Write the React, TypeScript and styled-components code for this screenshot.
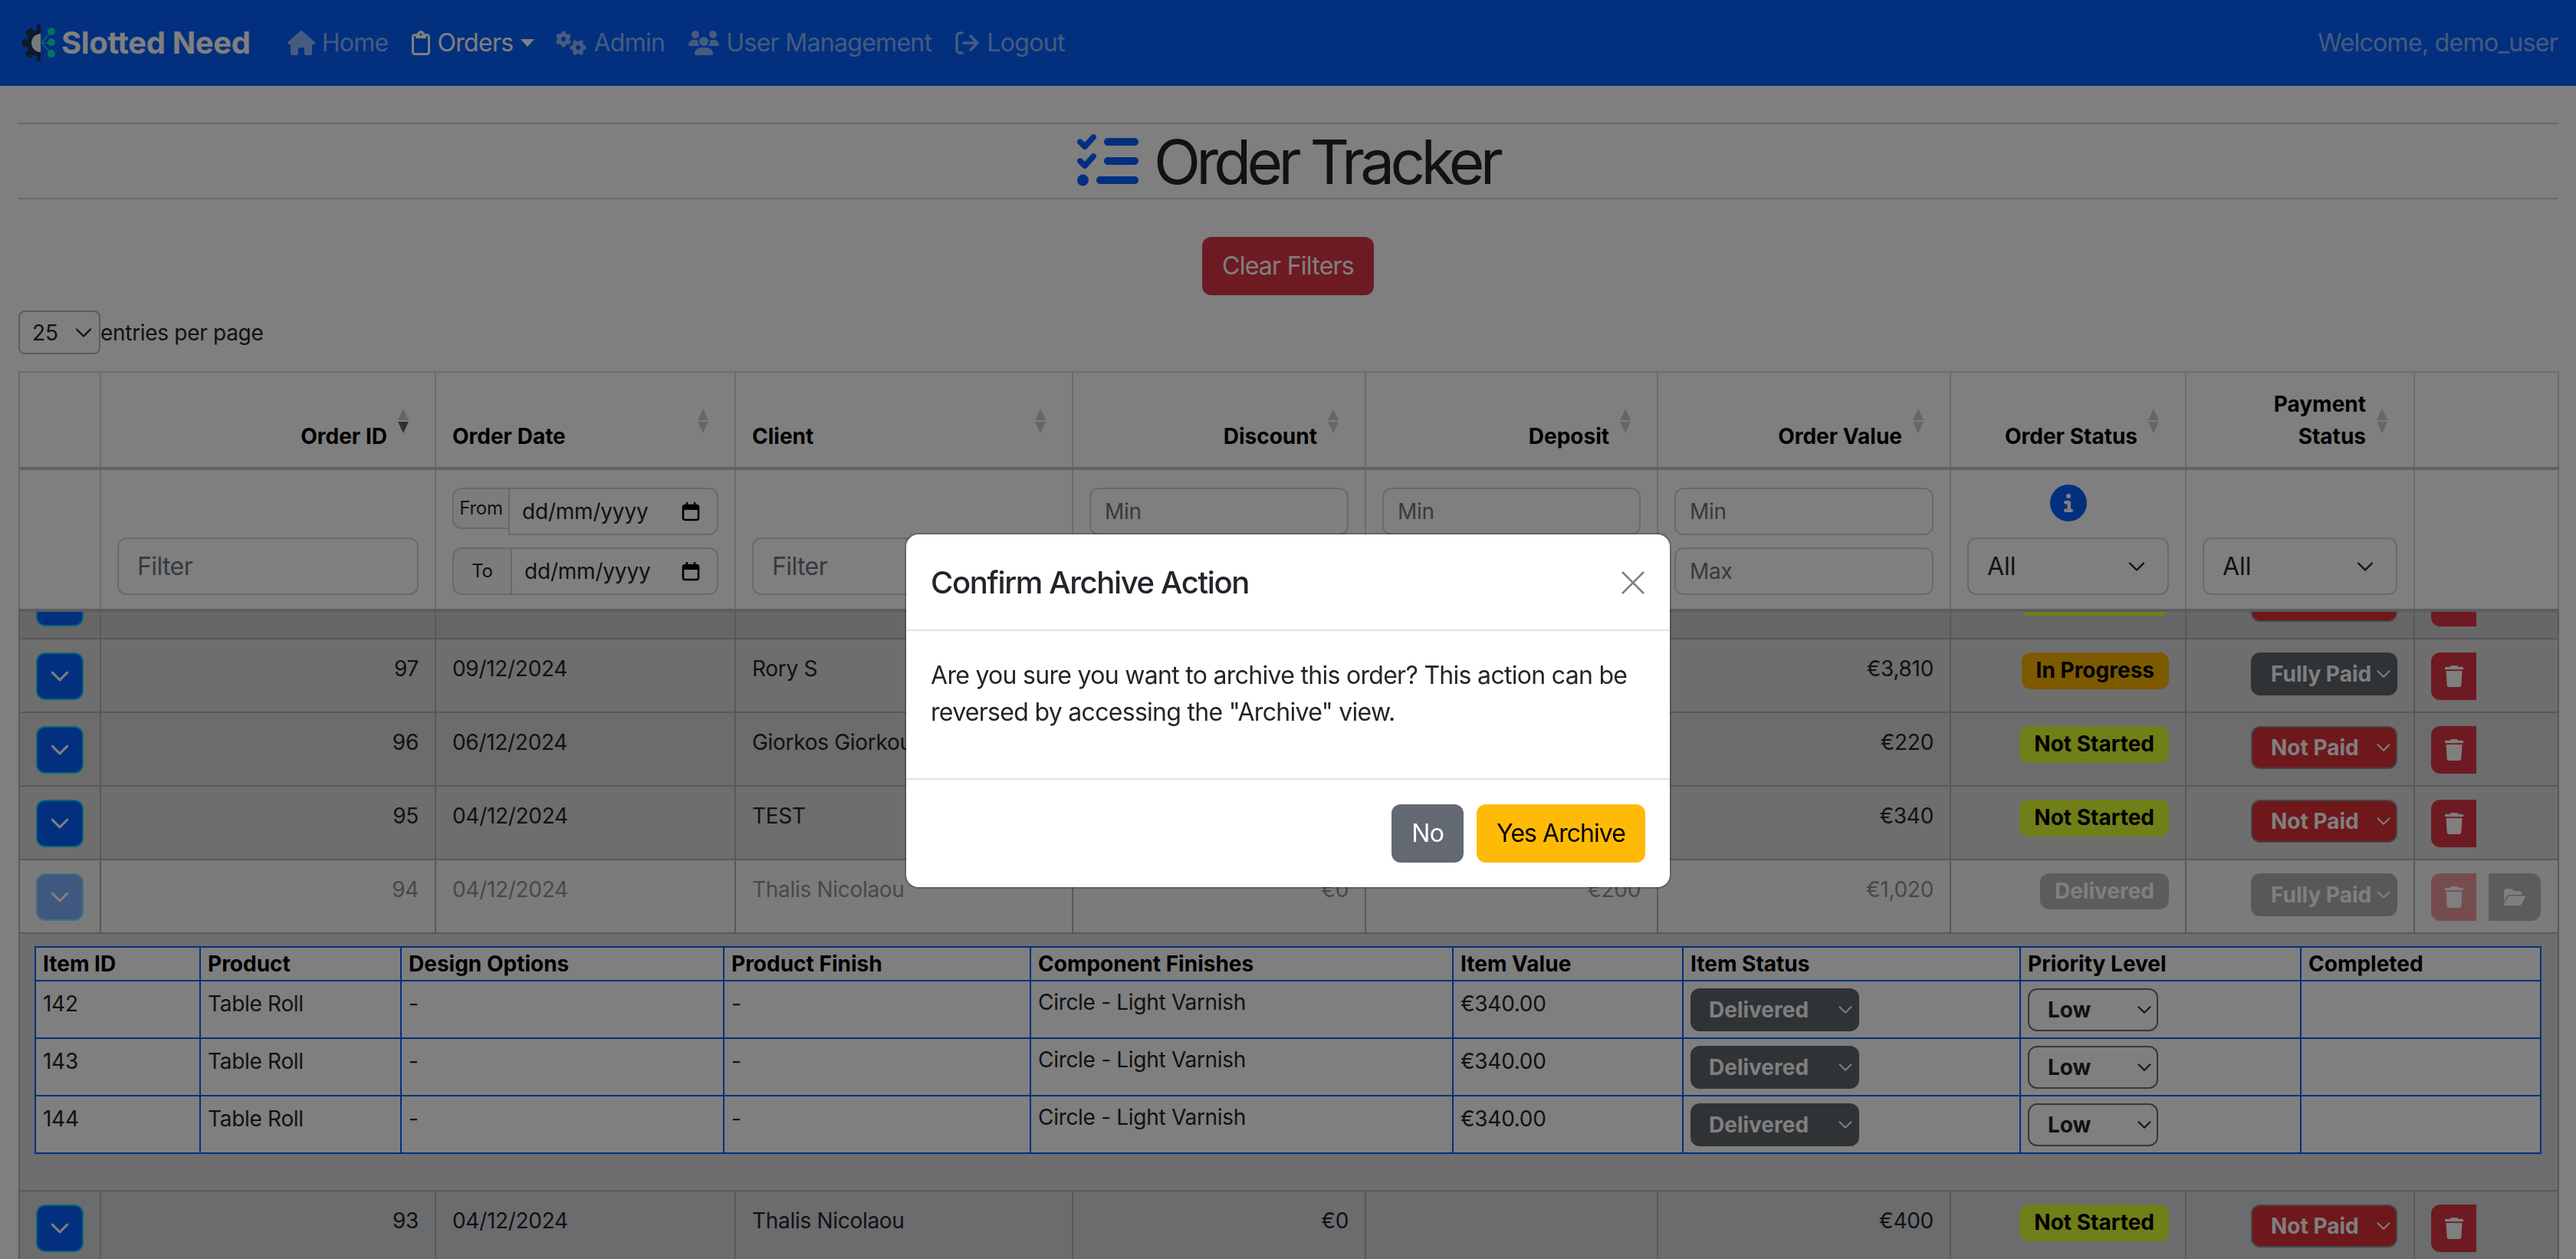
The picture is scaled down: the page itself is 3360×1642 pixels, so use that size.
import React from 'react';

import { createGlobalStyle, styled } from 'styled-components';
import {
  FaCircleInfo,
  FaFolderOpen,
  FaGears,
  FaHouse,
  FaListCheck,
  FaRegClipboard,
  FaTrash,
  FaUsers,
} from 'react-icons/fa6';

const BLUE = '#0560fe';

const chevron = (color: string) =>
  `url("data:image/svg+xml,%3csvg xmlns='http://www.w3.org/2000/svg' viewBox='0 0 16 16'%3e%3cpath fill='none' stroke='${color}' stroke-linecap='round' stroke-linejoin='round' stroke-width='1.6' d='m2 5 6 6 6-6'/%3e%3c/svg%3e")`;

const GlobalStyle = createGlobalStyle`
  html, body {
    margin: 0;
    height: 1642px;
    overflow: hidden;
    background: #fff;
  }
  body {
    font-family: Inter, "Liberation Sans", sans-serif;
    font-size: 32px;
    line-height: 1.5;
    letter-spacing: -0.7px;
    color: #212529;
  }
  * {
    box-sizing: border-box;
  }
`;

const Navbar = styled.nav`
  display: flex;
  align-items: center;
  height: 112px;
  padding: 0 24px;
  background: ${BLUE};
`;

const Brand = styled.a`
  display: flex;
  align-items: center;
  gap: 8px;
  margin-right: 48px;
  font-size: 40px;
  font-weight: 700;
  letter-spacing: -0.36px;
  color: #fff;
`;

const NavList = styled.div`
  display: flex;
  align-items: center;
  gap: 31px;
  flex: 1;
`;

const NavLink = styled.a<{ $active?: boolean }>`
  display: flex;
  align-items: center;
  gap: 9px;
  color: ${(p) => (p.$active ? '#fff' : 'rgba(255, 255, 255, 0.55)')};
`;

const NavIcon = styled.span<{ $width: number }>`
  display: flex;
  flex: none;
  width: ${(p) => p.$width}px;
  height: 32px;

  svg {
    width: 100%;
    height: 100%;
  }
`;

const Caret = styled.span`
  width: 0;
  height: 0;
  margin: 0 -3px 0 1px;
  border-top: 10px solid #fff;
  border-left: 9px solid transparent;
  border-right: 9px solid transparent;
`;

const Welcome = styled.span`
  color: rgba(255, 255, 255, 0.55);
`;

const Main = styled.main`
  padding: 48px 24px 0;
`;

const TitleBand = styled.div`
  display: flex;
  align-items: center;
  justify-content: center;
  gap: 20px;
  height: 100px;
  border-top: 2px solid #cfd4da;
  border-bottom: 2px solid #cfd4da;
`;

const Title = styled.h1`
  margin: 2px 0 0;
  font-size: 80px;
  font-weight: 400;
  line-height: 1.2;
  letter-spacing: -5.75px;
`;

const TitleIcon = styled.span`
  display: flex;
  color: ${BLUE};
  font-size: 80px;
`;

const ClearRow = styled.div`
  display: flex;
  justify-content: center;
  margin-top: 49px;
`;

const Button = styled.button<{ $tone: 'danger' | 'secondary' | 'warning' }>`
  height: 76px;
  padding: 0 26px;
  border: 0;
  border-radius: 12px;
  font: inherit;
  letter-spacing: ${(p) => (p.$tone === 'warning' ? '-0.95px' : '-0.75px')};
  color: ${(p) => (p.$tone === 'warning' ? '#000' : '#fff')};
  background: ${(p) => (p.$tone === 'danger' ? '#dc3545' : p.$tone === 'warning' ? '#ffba08' : '#626973')};
`;

const EntriesRow = styled.div`
  display: flex;
  align-items: center;
  margin: 20px 0 22px;
  font-size: 28px;
  letter-spacing: -0.3px;
`;

const EntriesSelect = styled.select`
  width: 107px;
  height: 57px;
  padding: 0 0 0 16px;
  appearance: none;
  border: 2px solid #b4b8bd;
  border-radius: 8px;
  font: inherit;
  color: #212529;
  background: #fff ${chevron('%23212529')} no-repeat right 8px center / 24px;
`;

const OrdersTable = styled.table`
  width: 3312px;
  table-layout: fixed;
  border-collapse: collapse;
  font-size: 28px;
  letter-spacing: -0.3px;
  border: 2px solid #d4d8dc;
`;

const HeadCell = styled.th<{ $align?: 'left' | 'right' | 'center' }>`
  position: relative;
  height: 126px;
  padding: 0 62px 19px ${(p) => (p.$align === 'center' ? '70px' : '21px')};
  vertical-align: bottom;
  font-weight: 700;
  line-height: 42px;
  letter-spacing: 0;
  color: #000;
  text-align: ${(p) => p.$align ?? 'left'};
  border-left: 2px solid #d4d8dc;
  border-right: 2px solid #d4d8dc;
  border-bottom: 4px solid #bfc3c7;
`;

const SortIcon = styled.svg`
  position: absolute;
  top: 47px;
  right: 34px;
  width: 14px;
  height: 32px;
`;

const FilterCell = styled.td`
  height: 185px;
  padding: 0 21px 18px;
  vertical-align: bottom;
  border-left: 2px solid #d4d8dc;
  border-right: 2px solid #d4d8dc;
  border-bottom: 4px solid #b4b8bc;
  background: #fff;
`;

const FilterStack = styled.div<{ $center?: boolean }>`
  display: flex;
  flex-direction: column;
  gap: 16px;
  align-items: ${(p) => (p.$center ? 'center' : 'stretch')};
`;

const TextFilter = styled.input<{ $small?: boolean }>`
  display: block;
  width: 100%;
  height: ${(p) => (p.$small ? '62px' : '75px')};
  padding: 0 ${(p) => (p.$small ? '18px' : '24px')};
  border: 2px solid #ced4da;
  border-radius: 12px;
  font-family: inherit;
  font-size: ${(p) => (p.$small ? '28px' : '32px')};
  letter-spacing: ${(p) => (p.$small ? '-0.3px' : '-0.6px')};
  background: #fff;

  &::placeholder {
    color: #6c757d;
    opacity: 1;
  }
`;

const DateGroup = styled.div`
  display: flex;
  align-items: flex-start;
`;

const DateLabel = styled.span<{ $full?: boolean }>`
  display: flex;
  align-items: center;
  justify-content: center;
  flex: none;
  width: ${(p) => (p.$full ? '76px' : '73px')};
  height: ${(p) => (p.$full ? '62px' : '54px')};
  border: 2px solid #ced4da;
  border-right: 0;
  border-radius: 12px 0 0 12px;
  font-size: 24px;
  background: #f8f9fa;
`;

const DateInput = styled.input`
  flex: 1;
  min-width: 0;
  height: 62px;
  padding: 0 16px;
  border: 2px solid #ced4da;
  border-radius: 0 12px 12px 0;
  font-family: inherit;
  font-size: 28px;
  letter-spacing: -0.2px;
  color: #212529;
  background: #fff;
`;

const DateBox = styled.span`
  position: relative;
  display: flex;
  flex: 1;
  min-width: 0;
`;

const CalendarIcon = styled.svg`
  position: absolute;
  top: 18px;
  right: 24px;
  width: 24px;
  height: 26px;
`;

const InfoIcon = styled.span`
  display: flex;
  margin-bottom: 5px;
  font-size: 48px;
  color: ${BLUE};
`;

const FilterSelect = styled.select`
  display: block;
  width: 100%;
  height: 75px;
  padding: 0 0 0 24px;
  appearance: none;
  border: 2px solid #ced4da;
  border-radius: 12px;
  font-family: inherit;
  font-size: 32px;
  color: #212529;
  background: #fff ${chevron('%23212529')} no-repeat right 24px center / 32px 24px;
`;

const BodyRow = styled.tr<{ $bg: string; $dim?: boolean }>`
  background: ${(p) => p.$bg};
  opacity: ${(p) => (p.$dim ? 0.5 : 1)};
`;

const Cell = styled.td<{ $align?: 'left' | 'right' }>`
  height: 96px;
  padding: 17px 21px 0;
  vertical-align: top;
  line-height: 42px;
  text-align: ${(p) => p.$align ?? 'left'};
  border: 2px solid #b2b2b2;
`;

const ClippedCell = styled.td`
  height: 36px;
  padding: 0 21px;
  vertical-align: top;
  text-align: right;
  border: 2px solid #b2b2b2;
`;

const ClipBox = styled.div`
  height: 34px;
  overflow: hidden;
`;

const ClipInner = styled.div`
  margin-top: -43px;
`;

const ExpandButton = styled.button`
  display: flex;
  align-items: center;
  justify-content: center;
  width: 62px;
  height: 62px;
  padding: 0;
  border: 2px solid #0dcaf0;
  border-radius: 12px;
  background: ${BLUE};
  color: #fff;

  svg {
    width: 26px;
    height: 26px;
  }
`;

const badgeColors = {
  progress: '#fab400',
  notStarted: '#e2fe30',
  delivered: '#6c757d',
};

const Badge = styled.span<{ $tone: keyof typeof badgeColors }>`
  display: inline-block;
  height: ${(p) => (p.$tone === 'delivered' ? '47px' : '48px')};
  padding: 0 19px;
  border-radius: 12px;
  font-weight: 700;
  line-height: 46px;
  letter-spacing: 0;
  vertical-align: top;
  color: ${(p) => (p.$tone === 'delivered' ? '#fff' : '#000')};
  background: ${(p) => badgeColors[p.$tone]};
`;

const ClippedBadge = styled(Badge)`
  width: 194px;
`;

const PaySelect = styled.select<{ $tone: 'danger' | 'dark' }>`
  display: block;
  height: 56px;
  width: 191px;
  margin-left: auto;
  padding: 0 0 0 24px;
  appearance: none;
  border: 2px solid ${(p) => (p.$tone === 'danger' ? '#8a8a8a' : '#5c636a')};
  border-radius: 12px;
  font-family: inherit;
  font-size: 28px;
  font-weight: 700;
  color: #fff;
  background: ${(p) => (p.$tone === 'danger' ? '#dc3038' : '#5f666c')} ${chevron('%23fff')} no-repeat right 6px center / 20px;
`;

const ActionRow = styled.div`
  display: flex;
  gap: 16px;
`;

const IconButton = styled.button<{ $tone: 'danger' | 'secondary' }>`
  display: flex;
  align-items: center;
  justify-content: center;
  width: ${(p) => (p.$tone === 'danger' ? '59px' : '68px')};
  height: 62px;
  padding: 0;
  border: 0;
  border-radius: ${(p) => (p.$tone === 'danger' ? '12px 0 0 12px' : '0 12px 12px 0')};
  font-size: 28px;
  color: #fff;
  background: ${(p) => (p.$tone === 'danger' ? '#dc3545' : '#6c757d')};
`;

const DetailCell = styled.td`
  padding: 16px 19px 47px;
  background: #dcdcdc;
  border: 2px solid #b2b2b2;
`;

const ItemsTable = styled.table`
  width: 3268px;
  table-layout: fixed;
  border-collapse: collapse;
  font-size: 28px;
  line-height: 42px;
  background: #fff;
`;

const ItemHead = styled.th`
  height: 44px;
  padding: 0 9px;
  text-align: left;
  font-weight: 700;
  letter-spacing: 0;
  color: #000;
  border: 2px solid ${BLUE};
`;

const ItemCell = styled.td<{ $raised?: boolean }>`
  height: 75px;
  padding: ${(p) => (p.$raised ? '6px' : '8px')} 9px 0;
  vertical-align: top;
  border: 2px solid ${BLUE};
`;

const ItemSelectCell = styled.td`
  height: 75px;
  padding: 0 9px;
  vertical-align: middle;
  border: 2px solid ${BLUE};
`;

const ItemStatusSelect = styled.select`
  display: block;
  width: 220px;
  height: 56px;
  padding: 0 0 0 24px;
  appearance: none;
  border: 0;
  border-radius: 12px;
  font-family: inherit;
  font-size: 28px;
  font-weight: 700;
  color: #fff;
  background: #5f666c ${chevron('%23fff')} no-repeat right 8px center / 20px;
`;

const PrioritySelect = styled.select`
  display: block;
  width: 170px;
  height: 56px;
  padding: 0 0 0 24px;
  appearance: none;
  border: 2px solid #6f6f6f;
  border-radius: 12px;
  font-family: inherit;
  font-size: 28px;
  font-weight: 700;
  color: #212529;
  background: #fff ${chevron('%23212529')} no-repeat right 6px center / 20px;
`;

const Backdrop = styled.div`
  position: fixed;
  inset: 0;
  background: rgba(0, 0, 0, 0.5);
`;

const DialogLayer = styled.div`
  position: fixed;
  inset: 0;
  display: flex;
  justify-content: center;
  align-items: flex-start;
  padding-top: 697px;
`;

const Dialog = styled.div`
  width: 996px;
  border-radius: 16px;
  background: #fff;
  box-shadow: 0 0 0 2px rgba(0, 0, 0, 0.2);
`;

const DialogHeader = styled.div`
  display: flex;
  align-items: center;
  justify-content: space-between;
  height: 126px;
  padding: 2px 32px 0 32px;
  border-bottom: 2px solid #dee2e6;
`;

const DialogTitle = styled.h5`
  margin: 0;
  font-size: 40px;
  font-weight: 500;
  line-height: 1.2;
  letter-spacing: -1.36px;
`;

const CloseIcon = styled.svg`
  width: 32px;
  height: 32px;
  color: #7f7f7f;
`;

const DialogBody = styled.div`
  padding: 34px 32px 32px;
`;

const DialogText = styled.p`
  margin: 0 0 30px;
`;

const DialogFooter = styled.div`
  display: flex;
  justify-content: flex-end;
  gap: 17px;
  padding: 32px;
  border-top: 2px solid #dee2e6;
`;

const Logo = () => (
  <svg width="48" height="48" viewBox="0 0 48 48" aria-hidden="true">
    <defs>
      <clipPath id="logo-left">
        <rect x="0" y="0" width="29" height="48" />
      </clipPath>
    </defs>
    <g clipPath="url(#logo-left)" fill="#1f3350">
      <circle cx="29" cy="24" r="18" />
      {[0, 45, 90, 135, 180, 225, 270, 315].map((a) => (
        <rect key={a} x="24" y="0" width="10" height="12" transform={`rotate(${a} 29 24)`} />
      ))}
      <circle cx="29" cy="24" r="12" fill="#f2f4f7" />
    </g>
    <g stroke="#10d8c0" strokeWidth="1.5" fill="none">
      <path d="M30 24 43 9M30 24h13M30 24l13 14" />
    </g>
    <g fill="#0ee0c4">
      <circle cx="43" cy="9" r="5" />
      <circle cx="43" cy="23" r="5" />
      <circle cx="43" cy="38" r="5" />
    </g>
  </svg>
);

const LogoutIcon = () => (
  <svg viewBox="0 0 32 32" fill="none" stroke="currentColor" strokeWidth="3.4" strokeLinecap="round" strokeLinejoin="round">
    <path d="M9 3H6a4 4 0 0 0-4 4v18a4 4 0 0 0 4 4h3" />
    <path d="M11 16h18M20 7l9 9-9 9" />
  </svg>
);

const Sort = ({ active }: { active?: boolean }) => (
  <SortIcon viewBox="0 0 14 32" aria-hidden="true">
    <path d="M7 0 14 15H0z" fill="#000" opacity="0.2" />
    <path d="M0 17h14L7 32z" fill="#000" opacity={active ? 0.62 : 0.2} />
  </SortIcon>
);

const Chevron = () => (
  <svg viewBox="0 0 16 16" fill="none" stroke="currentColor" strokeWidth="1.8" strokeLinecap="round" strokeLinejoin="round">
    <path d="m2 5 6 6 6-6" />
  </svg>
);

const DateFilter = ({ label, full }: { label: string; full?: boolean }) => (
  <DateGroup>
    <DateLabel $full={full}>{label}</DateLabel>
    <DateBox>
      <DateInput readOnly value="dd/mm/yyyy" />
      <CalendarIcon viewBox="0 0 24 26" fill="none" stroke="#000" strokeWidth="2.6" aria-hidden="true">
        <rect x="2" y="5" width="20" height="19" rx="2.5" />
        <path d="M2 8h20" strokeWidth="6" />
        <path d="M7 1v5M17 1v5" />
      </CalendarIcon>
    </DateBox>
  </DateGroup>
);

const columnWidths = [106, 437, 391, 440, 382, 381, 382, 307, 298, 188];

const itemColumnWidths = [215, 262, 421, 400, 551, 300, 440, 366, 313];

const itemHeads = [
  'Item ID',
  'Product',
  'Design Options',
  'Product Finish',
  'Component Finishes',
  'Item Value',
  'Item Status',
  'Priority Level',
  'Completed',
];

const orders = [
  { id: 97, date: '09/12/2024', client: 'Rory S', discount: '', deposit: '', value: '€3,810', status: 'progress', statusText: 'In Progress', pay: 'Fully Paid', bg: '#dcdcdc' },
  { id: 96, date: '06/12/2024', client: 'Giorkos Giorkou', discount: '', deposit: '', value: '€220', status: 'notStarted', statusText: 'Not Started', pay: 'Not Paid', bg: '#d8d8d8' },
  { id: 95, date: '04/12/2024', client: 'TEST', discount: '', deposit: '', value: '€340', status: 'notStarted', statusText: 'Not Started', pay: 'Not Paid', bg: '#dcdcdc' },
] as const;

type OrderRowProps = {
  id: number;
  date: string;
  client: string;
  discount: string;
  deposit: string;
  value: string;
  status: keyof typeof badgeColors;
  statusText: string;
  pay: string;
  bg: string;
  dim?: boolean;
  archive?: boolean;
};

const OrderRow = (o: OrderRowProps) => (
  <BodyRow $bg={o.bg} $dim={o.dim}>
    <Cell>
      <ExpandButton type="button">
        <Chevron />
      </ExpandButton>
    </Cell>
    <Cell $align="right">{o.id}</Cell>
    <Cell>{o.date}</Cell>
    <Cell>{o.client}</Cell>
    <Cell $align="right">{o.discount}</Cell>
    <Cell $align="right">{o.deposit}</Cell>
    <Cell $align="right">{o.value}</Cell>
    <Cell $align="right">
      <Badge $tone={o.status}>{o.statusText}</Badge>
    </Cell>
    <Cell>
      <PaySelect $tone={o.pay === 'Not Paid' ? 'danger' : 'dark'} defaultValue={o.pay}>
        <option>{o.pay}</option>
      </PaySelect>
    </Cell>
    <Cell>
      <ActionRow>
        <IconButton $tone="danger" type="button">
          <FaTrash />
        </IconButton>
        {o.archive && (
          <IconButton $tone="secondary" type="button">
            <FaFolderOpen />
          </IconButton>
        )}
      </ActionRow>
    </Cell>
  </BodyRow>
);

export default function App() {
  return (
    <>
      <GlobalStyle />
      <Navbar>
        <Brand>
          <Logo />
          Slotted Need
        </Brand>
        <NavList>
          <NavLink>
            <NavIcon $width={36}>
              <FaHouse />
            </NavIcon>
            Home
          </NavLink>
          <NavLink $active>
            <NavIcon $width={24}>
              <FaRegClipboard />
            </NavIcon>
            Orders
            <Caret />
          </NavLink>
          <NavLink>
            <NavIcon $width={40}>
              <FaGears />
            </NavIcon>
            Admin
          </NavLink>
          <NavLink>
            <NavIcon $width={40}>
              <FaUsers />
            </NavIcon>
            User Management
          </NavLink>
          <NavLink>
            <NavIcon $width={32}>
              <LogoutIcon />
            </NavIcon>
            Logout
          </NavLink>
        </NavList>
        <Welcome>Welcome, demo_user</Welcome>
      </Navbar>

      <Main>
        <TitleBand>
          <TitleIcon>
            <FaListCheck />
          </TitleIcon>
          <Title>Order Tracker</Title>
        </TitleBand>

        <ClearRow>
          <Button $tone="danger" type="button">
            Clear Filters
          </Button>
        </ClearRow>

        <EntriesRow>
          <EntriesSelect defaultValue="25">
            <option>25</option>
          </EntriesSelect>
          entries per page
        </EntriesRow>

        <OrdersTable>
          <colgroup>
            {columnWidths.map((w, i) => (
              <col key={i} width={w} />
            ))}
          </colgroup>
          <thead>
            <tr>
              <HeadCell />
              <HeadCell $align="right">
                Order ID
                <Sort active />
              </HeadCell>
              <HeadCell>
                Order Date
                <Sort />
              </HeadCell>
              <HeadCell>
                Client
                <Sort />
              </HeadCell>
              <HeadCell $align="right">
                Discount
                <Sort />
              </HeadCell>
              <HeadCell $align="right">
                Deposit
                <Sort />
              </HeadCell>
              <HeadCell $align="right">
                Order Value
                <Sort />
              </HeadCell>
              <HeadCell $align="center">
                Order Status
                <Sort />
              </HeadCell>
              <HeadCell $align="right">
                Payment
                <br />
                Status
                <Sort />
              </HeadCell>
              <HeadCell />
            </tr>
            <tr>
              <FilterCell />
              <FilterCell>
                <TextFilter placeholder="Filter" />
              </FilterCell>
              <FilterCell>
                <FilterStack>
                  <DateFilter label="From" />
                  <DateFilter label="To" full />
                </FilterStack>
              </FilterCell>
              <FilterCell>
                <TextFilter placeholder="Filter" />
              </FilterCell>
              {[0, 1, 2].map((i) => (
                <FilterCell key={i}>
                  <FilterStack>
                    <TextFilter $small placeholder="Min" />
                    <TextFilter $small placeholder="Max" />
                  </FilterStack>
                </FilterCell>
              ))}
              <FilterCell>
                <FilterStack $center>
                  <InfoIcon>
                    <FaCircleInfo />
                  </InfoIcon>
                  <FilterSelect defaultValue="All">
                    <option>All</option>
                  </FilterSelect>
                </FilterStack>
              </FilterCell>
              <FilterCell>
                <FilterSelect defaultValue="All">
                  <option>All</option>
                </FilterSelect>
              </FilterCell>
              <FilterCell />
            </tr>
          </thead>
          <tbody>
            <BodyRow $bg="#cfcfd1">
              <ClippedCell>
                <ClipBox>
                  <ClipInner>
                    <ExpandButton type="button" />
                  </ClipInner>
                </ClipBox>
              </ClippedCell>
              <ClippedCell />
              <ClippedCell />
              <ClippedCell />
              <ClippedCell />
              <ClippedCell />
              <ClippedCell />
              <ClippedCell>
                <ClipBox>
                  <ClipInner>
                    <ClippedBadge $tone="notStarted" />
                  </ClipInner>
                </ClipBox>
              </ClippedCell>
              <ClippedCell>
                <ClipBox>
                  <ClipInner>
                    <PaySelect $tone="danger" />
                  </ClipInner>
                </ClipBox>
              </ClippedCell>
              <ClippedCell>
                <ClipBox>
                  <ClipInner>
                    <IconButton $tone="danger" type="button" />
                  </ClipInner>
                </ClipBox>
              </ClippedCell>
            </BodyRow>

            {orders.map((o) => (
              <OrderRow key={o.id} {...o} />
            ))}

            <OrderRow
              id={94}
              date="04/12/2024"
              client="Thalis Nicolaou"
              discount="€0"
              deposit="€200"
              value="€1,020"
              status="delivered"
              statusText="Delivered"
              pay="Fully Paid"
              bg="#f0f0f0"
              dim
              archive
            />

            <tr>
              <DetailCell colSpan={10}>
                <ItemsTable>
                  <colgroup>
                    {itemColumnWidths.map((w, i) => (
                      <col key={i} width={w} />
                    ))}
                  </colgroup>
                  <thead>
                    <tr>
                      {itemHeads.map((h) => (
                        <ItemHead key={h}>{h}</ItemHead>
                      ))}
                    </tr>
                  </thead>
                  <tbody>
                    {[142, 143, 144].map((itemId) => (
                      <tr key={itemId}>
                        <ItemCell>{itemId}</ItemCell>
                        <ItemCell>Table Roll</ItemCell>
                        <ItemCell>-</ItemCell>
                        <ItemCell>-</ItemCell>
                        <ItemCell $raised>Circle - Light Varnish</ItemCell>
                        <ItemCell>€340.00</ItemCell>
                        <ItemSelectCell>
                          <ItemStatusSelect defaultValue="Delivered">
                            <option>Delivered</option>
                          </ItemStatusSelect>
                        </ItemSelectCell>
                        <ItemSelectCell>
                          <PrioritySelect defaultValue="Low">
                            <option>Low</option>
                          </PrioritySelect>
                        </ItemSelectCell>
                        <ItemCell />
                      </tr>
                    ))}
                  </tbody>
                </ItemsTable>
              </DetailCell>
            </tr>

            <OrderRow
              id={93}
              date="04/12/2024"
              client="Thalis Nicolaou"
              discount="€0"
              deposit=""
              value="€400"
              status="notStarted"
              statusText="Not Started"
              pay="Not Paid"
              bg="#d6d8dc"
            />
          </tbody>
        </OrdersTable>
      </Main>

      <Backdrop />

      <DialogLayer>
        <Dialog>
          <DialogHeader>
            <DialogTitle>Confirm Archive Action</DialogTitle>
            <CloseIcon viewBox="0 0 16 16" fill="none" stroke="currentColor" strokeWidth="1.3" aria-hidden="true">
              <path d="M1 1l14 14M15 1 1 15" />
            </CloseIcon>
          </DialogHeader>
          <DialogBody>
            <DialogText>
              Are you sure you want to archive this order? This action can be reversed by accessing the "Archive" view.
            </DialogText>
          </DialogBody>
          <DialogFooter>
            <Button $tone="secondary" type="button">
              No
            </Button>
            <Button $tone="warning" type="button">
              Yes Archive
            </Button>
          </DialogFooter>
        </Dialog>
      </DialogLayer>
    </>
  );
}
